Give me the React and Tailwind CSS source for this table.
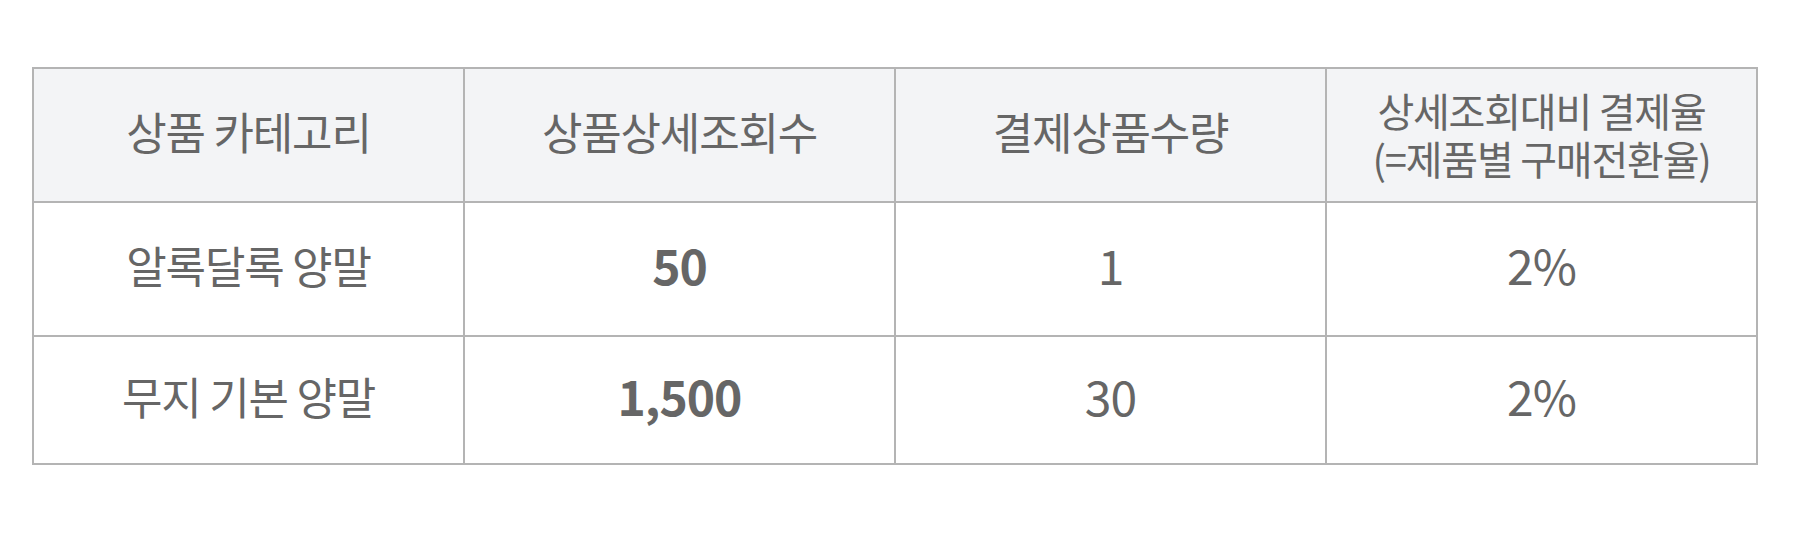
import React from 'react';

const rows = [
  { name: '알록달록 양말', views: '50', qty: '1', rate: '2%' },
  { name: '무지 기본 양말', views: '1,500', qty: '30', rate: '2%' },
];

const ko = { fontFamily: '"Noto Sans CJK KR", "Noto Sans", sans-serif' };

export default function App() {
  return (
    <div className="w-[1800px] h-[536px] bg-white pt-[67px] pl-[32px]" style={ko}>
      <table className="w-[1726px] border-collapse table-fixed text-[#666666]">
        <thead>
          <tr className="h-[134px] bg-[#f3f4f6]">
            <th className="border-2 border-[#b4b4b4] font-normal text-[44px] tracking-[-1.2px] pb-[8px]">상품 카테고리</th>
            <th className="border-2 border-[#b4b4b4] font-normal text-[44px] tracking-[-1.2px] pb-[8px]">상품상세조회수</th>
            <th className="border-2 border-[#b4b4b4] font-normal text-[44px] tracking-[-1.2px] pb-[8px]">결제상품수량</th>
            <th className="border-2 border-[#b4b4b4] font-normal text-[40px] tracking-[-1.2px] leading-[48px] pb-[2px]">
              상세조회대비 결제율
              <br />
              (=제품별 구매전환율)
            </th>
          </tr>
        </thead>
        <tbody>
          {rows.map((r, i) => (
            <tr key={r.name} className={i === 0 ? 'h-[134px]' : 'h-[128px]'}>
              <td className="border-2 border-[#b4b4b4] text-center text-[44px] tracking-[-1.2px] pb-[8px]">{r.name}</td>
              <td className="border-2 border-[#b4b4b4] text-center text-[48px] font-bold tracking-[-1px] pb-[10px]">{r.views}</td>
              <td className="border-2 border-[#b4b4b4] text-center text-[48px] tracking-[-1px] pb-[10px]">{r.qty}</td>
              <td className="border-2 border-[#b4b4b4] text-center text-[48px] tracking-[-1px] pb-[10px]">{r.rate}</td>
            </tr>
          ))}
        </tbody>
      </table>
    </div>
  );
}
